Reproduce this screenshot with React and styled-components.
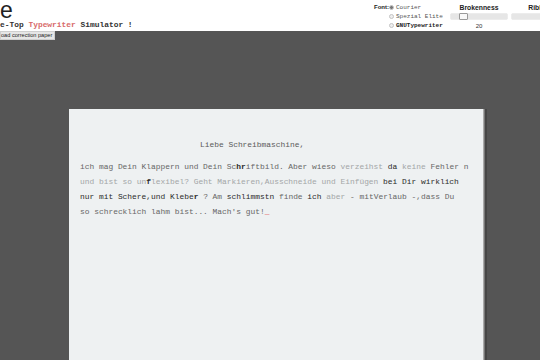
import React from "react";
import styled, { createGlobalStyle } from "styled-components";

const Global = createGlobalStyle`
  html, body { margin: 0; padding: 0; background: #555555; overflow: hidden; }
  body { font-family: "Liberation Sans", Arial, sans-serif; }
`;

const Page = styled.div`
  width: 540px;
  height: 360px;
  display: flex;
  flex-direction: column;
  overflow: hidden;
`;

const Header = styled.header`
  height: 31px;
  background: #ffffff;
  display: flex;
  flex-shrink: 0;
  overflow: hidden;
`;

const TitleBlock = styled.div`
  display: flex;
  flex-direction: column;
  width: 374px;
  flex-shrink: 0;
`;

const BigTitle = styled.div`
  font-family: "Liberation Sans", Arial, sans-serif;
  font-size: 23px;
  line-height: 20px;
  height: 20px;
  overflow: hidden;
  color: #222;
`;

const SubTitle = styled.div`
  font-family: "Liberation Mono", "Courier New", monospace;
  font-size: 7.9px;
  line-height: 9px;
  font-weight: bold;
  color: #333;
  white-space: pre;
`;

const Red = styled.span`
  color: #d86a6a;
`;

const Controls = styled.div`
  display: flex;
  align-items: flex-start;
  flex-shrink: 0;
`;

const FontLabel = styled.div`
  font-family: "Liberation Sans", Arial, sans-serif;
  font-size: 6px;
  font-weight: bold;
  color: #222;
  margin-top: 4px;
  width: 15px;
  white-space: nowrap;
`;

const RadioList = styled.div`
  display: flex;
  flex-direction: column;
  gap: 2px;
  margin-top: 4px;
  width: 62px;
`;

const RadioRow = styled.div`
  display: flex;
  align-items: center;
  gap: 2px;
  height: 7px;
  font-family: "Liberation Mono", "Courier New", monospace;
  font-size: 6px;
  font-weight: ${(p) => (p.$bold ? "bold" : "normal")};
  color: ${(p) => (p.$bold ? "#222" : "#555")};
  white-space: nowrap;
`;

const Radio = styled.span`
  width: 3px;
  height: 3px;
  border-radius: 50%;
  border: 1px solid #c4c4c4;
  background: ${(p) => (p.$on ? "#777" : "#eee")};
  flex-shrink: 0;
`;

const SliderGroup = styled.div`
  display: flex;
  flex-direction: column;
  align-items: center;
  width: ${(p) => p.$w}px;
  margin-left: ${(p) => p.$ml}px;
  flex-shrink: 0;
`;

const SliderLabel = styled.div`
  font-family: "Liberation Sans", Arial, sans-serif;
  font-size: 6.8px;
  font-weight: bold;
  color: #222;
  margin-top: 4px;
  height: 8px;
  white-space: nowrap;
`;

const Track = styled.div`
  position: relative;
  width: ${(p) => p.$w}px;
  height: 5px;
  background: #e6e6e6;
  border: 1px solid #ececec;
  border-radius: 2px;
  margin-top: 1px;
`;

const Handle = styled.span`
  position: absolute;
  top: -1px;
  left: ${(p) => p.$x}px;
  width: 7px;
  height: 5px;
  background: #f8f8f8;
  border: 1px solid #999;
  border-radius: 1px;
`;

const Value = styled.div`
  font-family: "Liberation Sans", Arial, sans-serif;
  font-size: 6px;
  color: #333;
  margin-top: 3px;
`;

const Stage = styled.main`
  flex: 1;
  background: #555555;
  display: flex;
  flex-direction: column;
  align-items: flex-start;
`;

const LoadButton = styled.button`
  font-family: "Liberation Sans", Arial, sans-serif;
  font-size: 5.6px;
  color: #222;
  background: #e6e6e6;
  border: 1px solid #cfcfcf;
  padding: 0 2px 0 0;
  height: 9px;
  line-height: 7px;
  white-space: nowrap;
  margin: 0;
`;

const Paper = styled.section`
  margin-top: 69px;
  margin-left: 69px;
  width: 403px;
  height: 260px;
  background: #eef1f2;
  padding: 28px 0 0 11px;
  box-shadow: 1px 0 0 #aaa, 2px 0 0 #777, 4px 0 0 #464646;
  font-family: "Liberation Mono", "Courier New", monospace;
  font-size: 7.9px;
  color: #666;
  white-space: pre;
`;

const Salutation = styled.div`
  padding-left: 120px;
  line-height: 15px;
  color: #5a5a5a;
  margin-bottom: 7px;
`;

const Line = styled.div`
  line-height: 15px;
  height: 15px;
`;

const Ink = styled.span`
  color: ${(p) =>
    p.$t === "dark" ? "#2a2a2a" : p.$t === "light" ? "#a3a6a7" : "#666"};
  font-weight: ${(p) => (p.$b ? "bold" : "normal")};
`;

const Cursor = styled.span`
  color: #e03030;
  font-weight: bold;
`;

export default function App() {
  return (
    <Page>
      <Global />
      <Header>
        <TitleBlock>
          <BigTitle>e</BigTitle>
          <SubTitle>
            e-Top <Red>Typewriter</Red> Simulator !
          </SubTitle>
        </TitleBlock>
        <Controls>
          <FontLabel>Font:</FontLabel>
          <RadioList>
            <RadioRow>
              <Radio $on />
              Courier
            </RadioRow>
            <RadioRow>
              <Radio />
              Spezial Elite
            </RadioRow>
            <RadioRow $bold>
              <Radio />
              GNUTypewriter
            </RadioRow>
          </RadioList>
          <SliderGroup $w={58} $ml={-1}>
            <SliderLabel>Brokenness</SliderLabel>
            <Track $w={56}>
              <Handle $x={8} />
            </Track>
            <Value>20</Value>
          </SliderGroup>
          <SliderGroup $w={60} $ml={2}>
            <SliderLabel>Ribbon</SliderLabel>
            <Track $w={56} />
          </SliderGroup>
        </Controls>
      </Header>
      <Stage>
        <LoadButton>oad correction paper</LoadButton>
        <Paper>
          <Salutation>Liebe Schreibmaschine,</Salutation>
          <Line>
            <Ink>ich mag Dein Klappern und Dein Sc</Ink>
            <Ink $t="dark" $b>hr</Ink>
            <Ink>iftbild. Aber wieso </Ink>
            <Ink $t="light">verzeihst</Ink>
            <Ink> </Ink>
            <Ink $t="dark">da</Ink>
            <Ink> </Ink>
            <Ink $t="light">keine</Ink>
            <Ink> Fehler n</Ink>
          </Line>
          <Line>
            <Ink $t="light">und bist so un</Ink>
            <Ink $t="dark" $b>f</Ink>
            <Ink $t="light">lexibel? Geht Markieren,Ausschneide und Einfügen </Ink>
            <Ink $t="dark">bei Dir wirklich</Ink>
          </Line>
          <Line>
            <Ink $t="dark">nur mit Schere,und Klebe</Ink>
            <Ink $t="dark" $b>r</Ink>
            <Ink> ? Am </Ink>
            <Ink $t="dark">schlimmstn</Ink>
            <Ink> finde </Ink>
            <Ink $t="dark">ich</Ink>
            <Ink $t="light"> aber</Ink>
            <Ink> - mitVerlaub -,dass Du</Ink>
          </Line>
          <Line>
            <Ink>so schrecklich lahm bist... Mach's gut!</Ink>
            <Cursor>_</Cursor>
          </Line>
        </Paper>
      </Stage>
    </Page>
  );
}
